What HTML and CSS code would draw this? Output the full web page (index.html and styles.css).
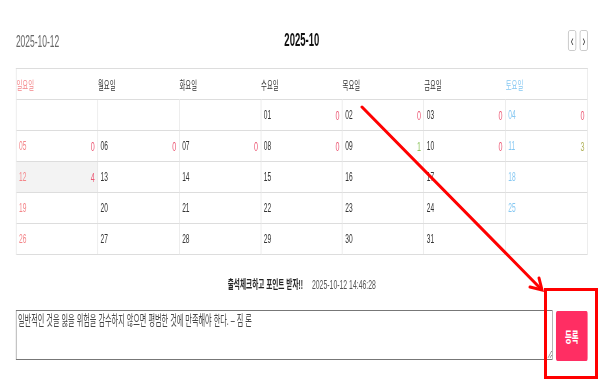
FILE: index.html
```html
<!DOCTYPE html>
<html lang="ko">
<head>
    <meta charset="UTF-8">
    <meta name="viewport" content="width=device-width, initial-scale=1.0">
    <title>출석체크</title>
    <link rel="stylesheet" href="styles.css">
</head>
<body>
    <div class="frame">
    <div class="page">
        <div class="cal-head">
            <div class="today-date">2025-10-12</div>
            <div class="month-title">2025-10</div>
            <div class="nav">
                <button class="nav-btn">&lsaquo;</button>
                <button class="nav-btn">&rsaquo;</button>
            </div>
        </div>

        <div class="cal-grid">
            <div class="wd sun">일요일</div>
            <div class="wd">월요일</div>
            <div class="wd">화요일</div>
            <div class="wd">수요일</div>
            <div class="wd">목요일</div>
            <div class="wd">금요일</div>
            <div class="wd sat">토요일</div>

            <div class="day"></div>
            <div class="day"></div>
            <div class="day"></div>
            <div class="day"><span>01</span><span class="cnt">0</span></div>
            <div class="day"><span>02</span><span class="cnt">0</span></div>
            <div class="day"><span>03</span><span class="cnt">0</span></div>
            <div class="day sat"><span>04</span><span class="cnt">0</span></div>

            <div class="day sun"><span>05</span><span class="cnt">0</span></div>
            <div class="day"><span>06</span><span class="cnt">0</span></div>
            <div class="day"><span>07</span><span class="cnt">0</span></div>
            <div class="day"><span>08</span><span class="cnt">0</span></div>
            <div class="day"><span>09</span><span class="cnt good">1</span></div>
            <div class="day"><span>10</span><span class="cnt">0</span></div>
            <div class="day sat"><span>11</span><span class="cnt best">3</span></div>

            <div class="day sun today"><span>12</span><span class="cnt">4</span></div>
            <div class="day"><span>13</span></div>
            <div class="day"><span>14</span></div>
            <div class="day"><span>15</span></div>
            <div class="day"><span>16</span></div>
            <div class="day"><span>17</span></div>
            <div class="day sat"><span>18</span></div>

            <div class="day sun"><span>19</span></div>
            <div class="day"><span>20</span></div>
            <div class="day"><span>21</span></div>
            <div class="day"><span>22</span></div>
            <div class="day"><span>23</span></div>
            <div class="day"><span>24</span></div>
            <div class="day sat"><span>25</span></div>

            <div class="day sun"><span>26</span></div>
            <div class="day"><span>27</span></div>
            <div class="day"><span>28</span></div>
            <div class="day"><span>29</span></div>
            <div class="day"><span>30</span></div>
            <div class="day"><span>31</span></div>
            <div class="day"></div>
        </div>

        <div class="check-title">
            <strong>출석체크하고 포인트 받자!!</strong>
            <span class="now">2025-10-12 14:46:28</span>
        </div>

        <div class="entry">
            <textarea class="memo">일반적인 것을 잃을 위험을 감수하지 않으면 평범한 것에 만족해야 한다. – 짐 론</textarea>
            <button class="submit">등록</button>
        </div>
    </div>
    </div>

    <!-- annotation drawn over the screenshot -->
    <svg class="marks" width="600" height="382" viewBox="0 0 600 382">
        <g stroke="#ff0000" stroke-width="3" fill="none" stroke-linecap="round">
            <line x1="362" y1="107" x2="541" y2="289"/>
            <polyline points="539,278 542,290 530,287"/>
            <rect x="545.5" y="289.5" width="51" height="88"/>
        </g>
    </svg>
</body>
</html>
```

FILE: styles.css
```css
body {
    margin: 0;
    font-family: "Liberation Sans", "Noto Sans CJK KR", sans-serif;
    color: #333;
    background: #fff;
    overflow: hidden;
}
.frame {
    width: 600px;
    height: 382px;
    overflow: hidden;
}
/* the page is drawn wide and squeezed to fit, like the captured screen */
.page {
    width: 1079px;
    padding: 20px 23px 0 30px;
    transform: scaleX(0.53);
    transform-origin: 0 0;
}
.cal-head {
    display: grid;
    grid-template-columns: 1fr auto 1fr;
    align-items: center;
    height: 40px;
    margin-bottom: 8px;
}
.today-date {
    font-size: 16px;
    color: #666;
    padding-top: 3px;
}
.month-title {
    font-size: 18px;
    font-weight: bold;
    color: #111;
}
.nav {
    justify-self: end;
    display: flex;
    gap: 7px;
    padding-top: 1px;
}
.nav-btn {
    width: 15px;
    height: 21px;
    padding: 0;
    border: 1px solid #bbb;
    border-radius: 3px;
    background: #fff;
    color: #333;
    font-size: 16px;
    line-height: 17px;
    font-family: "Liberation Sans", sans-serif;
}
.cal-grid {
    display: grid;
    grid-template-columns: repeat(7, 1fr);
    border-top: 1px solid #ddd;
    border-left: 1px solid #ddd;
    border-right: 1px solid #ddd;
}
.wd {
    height: 31px;
    box-sizing: border-box;
    border-bottom: 1px solid #ddd;
    display: flex;
    align-items: center;
    font-size: 12px;
    color: #333;
}
.day {
    height: 31px;
    box-sizing: border-box;
    border-bottom: 1px solid #ddd;
    border-right: 1px solid #ddd;
    padding: 0 5px 0 5px;
    display: flex;
    justify-content: space-between;
    align-items: center;
    font-size: 12.5px;
    color: #333;
}
.day:nth-child(7n) {
    border-right: none;
}
.sun {
    color: #f4868a;
}
.sat {
    color: #86c8f2;
}
.today {
    background: #f3f3f3;
}
.cnt {
    font-size: 13.5px;
    color: #ec5a76;
}
.cnt.good {
    color: #8cc35a;
}
.cnt.best {
    color: #b2b35c;
}
.check-title {
    display: flex;
    justify-content: center;
    align-items: baseline;
    gap: 17px;
    margin-top: 22px;
    height: 16px;
    line-height: 16px;
    font-size: 12.5px;
    color: #222;
}
.now {
    font-size: 13px;
    color: #555;
}
.entry {
    display: flex;
    align-items: flex-start;
    gap: 6px;
    margin-top: 17px;
}
.memo {
    flex: 1;
    height: 50px;
    box-sizing: border-box;
    margin: 0;
    padding: 2px 3px;
    border: 1px solid #777;
    font-family: "Liberation Sans", "Noto Sans CJK KR", sans-serif;
    font-size: 13.5px;
    line-height: 1.2;
    color: #444;
    resize: vertical;
}
.submit {
    width: 60px;
    height: 50px;
    margin-top: 1px;
    border: none;
    border-radius: 3px;
    background: #ff2e63;
    color: #fff;
    font-size: 14px;
    font-weight: bold;
    font-family: "Liberation Sans", "Noto Sans CJK KR", sans-serif;
}
.marks {
    position: absolute;
    top: 0;
    left: 0;
    pointer-events: none;
}
```
